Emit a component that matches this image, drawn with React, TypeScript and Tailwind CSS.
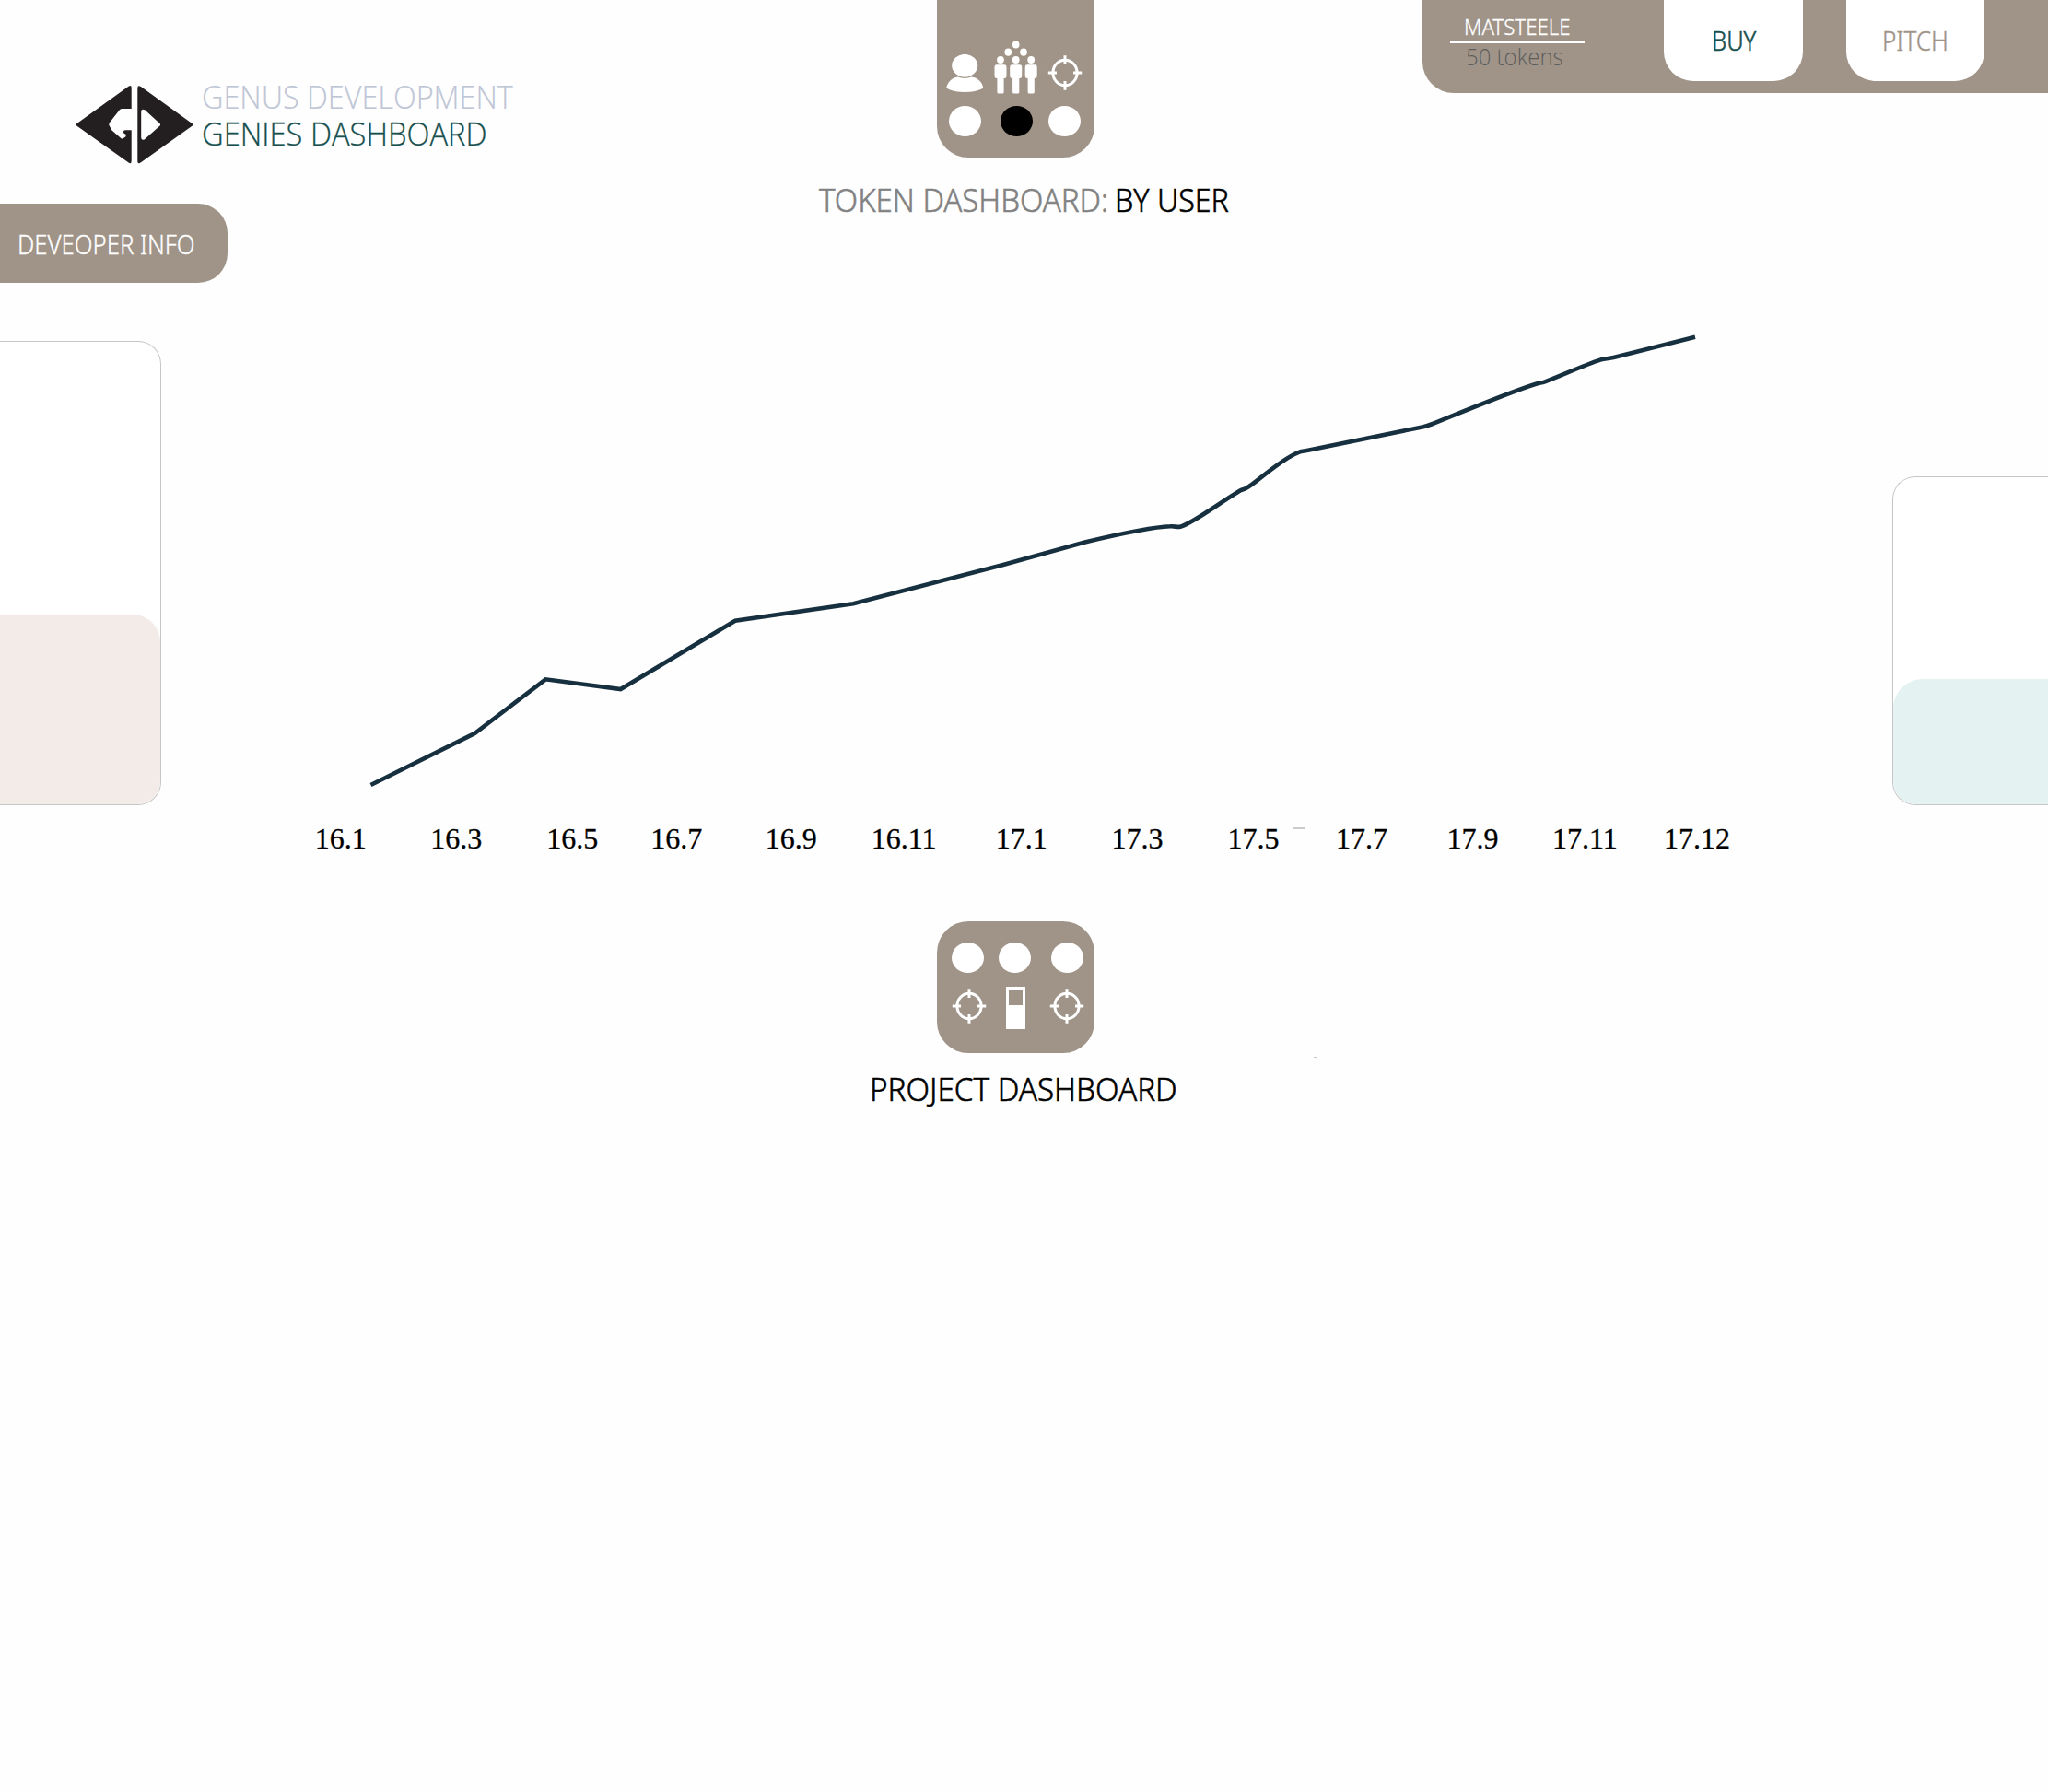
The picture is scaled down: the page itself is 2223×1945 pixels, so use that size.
import React from "react";

const AXIS = [
  { label: "16.1", slot: "w-[125.5px]" },
  { label: "16.3", slot: "w-[126px]" },
  { label: "16.5", slot: "w-[113px]" },
  { label: "16.7", slot: "w-[124.5px]" },
  { label: "16.9", slot: "w-[115px]" },
  { label: "16.11", slot: "w-[135px]" },
  { label: "17.1", slot: "w-[125.7px]" },
  { label: "17.3", slot: "w-[126px]" },
  { label: "17.5", slot: "w-[117.5px]", dash: true },
  { label: "17.7", slot: "w-[120.5px]" },
  { label: "17.9", slot: "w-[114.5px]" },
  { label: "17.11", slot: "w-[121px]" },
  { label: "17.12", slot: "w-[80px]" },
];

function Text({ children, className = "" }: { children: React.ReactNode; className?: string }) {
  return (
    <span className={`block origin-left whitespace-nowrap leading-none font-light ${className}`}>
      {children}
    </span>
  );
}

function Logo() {
  return (
    <svg width="128" height="86" viewBox="82 92 128 86" className="shrink-0" fill="#231f20">
      <path d="M83.2 134.2 L139.8 93.6 Q142.7 92 142.7 95 V118 H132.6 Q131 118 129.8 119.3 L118.8 133.2 Q117.8 135 118.8 136.8 L121.5 141.5 L131.5 150.2 Q132.6 151 133.6 150.2 L136.2 148.6 Q137 147.8 136.3 145.6 Q134.2 145.6 134 143.6 Q133.6 141.2 135.8 141.2 H142.7 V174.5 Q142.7 178.4 139.6 176.6 L83.2 136.6 Q81.8 135.4 83.2 134.2 Z" />
      <path
        fillRule="evenodd"
        d="M149.3 95.4 Q149.3 92 152.6 93.8 L208.8 134.2 Q210.2 135.4 208.8 136.6 L152.6 176.6 Q149.3 178.4 149.3 175 Z M153.2 121 V149.6 Q153.4 152.4 156.6 151.6 L173.6 136.6 Q174.6 135.4 173.6 134.2 L157.2 119.2 Q153.6 117.6 153.2 121 Z"
      />
    </svg>
  );
}

function UserIcon() {
  return (
    <svg width="40" height="41" viewBox="1027 59 40 41" fill="#fff">
      <ellipse cx="1047.2" cy="71.3" rx="14" ry="12.4" />
      <path d="M1039.6 83.6 Q1047 86.4 1054.4 83.6 C1061 84.2 1065.4 88.6 1067 94 Q1067.4 96 1064.4 97 Q1058 100 1047.2 100 Q1036.4 100 1030 97 Q1027 96 1027.5 94 C1029.4 88.6 1033.6 84.2 1039.6 83.6 Z" />
    </svg>
  );
}

function CrowdIcon() {
  return (
    <svg width="48" height="58" viewBox="1079 44.5 48 58" fill="#fff">
      <ellipse cx="1102.7" cy="49" rx="3.8" ry="4.1" />
      <ellipse cx="1094.3" cy="57.2" rx="3.8" ry="4.1" />
      <ellipse cx="1111" cy="57.2" rx="3.8" ry="4.1" />
      {[1086, 1102.7, 1119.2].map((x) => (
        <g key={x}>
          <ellipse cx={x} cy="65.5" rx="3.9" ry="4.1" />
          <rect x={x - 6.5} y="70.8" width="13" height="14.8" rx="2.4" />
          <rect x={x - 3.6} y="80" width="7.2" height="22" rx="1.6" />
        </g>
      ))}
    </svg>
  );
}

function TargetIcon() {
  return (
    <svg width="38" height="38" viewBox="-19 -19 38 38" fill="none" stroke="#fff" strokeWidth="3">
      <ellipse rx="13.1" ry="13.7" />
      <path d="M0 -18.8 V-9 M0 18.8 V9 M-18.2 0 H-9 M18.2 0 H9" />
    </svg>
  );
}

function Dot({ className }: { className: string }) {
  return <span className={`block h-[33px] w-[35px] shrink-0 rounded-[50%] ${className}`} />;
}

export default function App() {
  return (
    <div className="min-h-[1945px] w-[2223px] overflow-hidden bg-[#fefefe] font-['Open_Sans',sans-serif]">
      <header className="flex h-[340px] items-start">
        {/* Brand and developer tab */}
        <div className="w-[889px]">
          <div className="flex h-[221px] items-start pl-[82px] pt-[86px]">
            <div className="pt-1.5">
              <Logo />
            </div>
            <div className="pl-[9px] pt-px">
              <Text className="h-[40px] scale-x-[0.925] text-[35px] text-[#bfc6d6] [-webkit-text-stroke:0.2px]">
                GENUS DEVELOPMENT
              </Text>
              <Text className="scale-x-[0.934] text-[35px] text-[#17504f] [-webkit-text-stroke:0.3px]">
                GENIES DASHBOARD
              </Text>
            </div>
          </div>
          <div className="h-[86px] w-[247px] rounded-r-[32px] bg-[#a09489] pl-[19px] pt-[30px]">
            <Text className="scale-x-[0.903] font-['Noto_Sans'] text-[28.5px] text-white [-webkit-text-stroke:0.3px]">
              DEVEOPER INFO
            </Text>
          </div>
        </div>

        {/* Token dashboard switcher */}
        <div className="w-[655px]">
          <div className="ml-32 h-[171px] w-[171px] rounded-b-[34px] bg-[#a09489] pt-[44px]">
            <div className="flex h-[58px] items-start pl-[10px]">
              <div className="pt-[15px]">
                <UserIcon />
              </div>
              <div className="ml-[12px]">
                <CrowdIcon />
              </div>
              <div className="ml-[9.7px] pt-[16px]">
                <TargetIcon />
              </div>
            </div>
            <div className="flex pl-[13px] pt-[13px]">
              <Dot className="bg-white" />
              <Dot className="ml-[21px] bg-black" />
              <Dot className="ml-[17px] bg-white" />
            </div>
          </div>
          <div className="flex pt-[27.5px]">
            <Text className="w-[320.8px] scale-x-[0.929] font-['Noto_Sans'] text-[35.5px] text-[#828282] [-webkit-text-stroke:0.6px]">
              TOKEN DASHBOARD:
            </Text>
            <Text className="scale-x-[0.907] font-['Noto_Sans'] text-[35.5px] text-black [-webkit-text-stroke:0.6px]">
              BY USER
            </Text>
          </div>
        </div>

        {/* Account bar */}
        <div className="flex h-[101px] flex-1 items-start rounded-bl-[34px] bg-[#a09489]">
          <div className="w-[262px] pl-[30px] pt-[17px]">
            <Text className="ml-[14.5px] scale-x-[0.908] font-['Noto_Sans'] text-[24.5px] text-white [-webkit-text-stroke:0.3px]">
              MATSTEELE
            </Text>
            <div className="mt-[2.5px] h-[3px] w-[146px] bg-white" />
            <Text className="ml-[16.5px] mt-px scale-x-[0.922] text-[26px] text-[#5b5d5d]">50 tokens</Text>
          </div>
          <div className="h-[88px] w-[150.5px] rounded-b-[32px] bg-white pl-[52px] pt-[30px]">
            <Text className="scale-x-[0.896] font-['Noto_Sans'] text-[28.5px] text-[#17504f] [-webkit-text-stroke:0.6px]">
              BUY
            </Text>
          </div>
          <div className="ml-[47px] h-[88px] w-[150.5px] rounded-b-[32px] bg-white pl-[39px] pt-[30px]">
            <Text className="scale-x-[0.915] font-['Noto_Sans'] text-[28.5px] text-[#a09489] [-webkit-text-stroke:0.4px]">
              PITCH
            </Text>
          </div>
        </div>
      </header>

      <main className="flex h-[660px] items-start">
        <aside className="mr-px mt-[30px] flex h-[504px] w-[175px] flex-col justify-end overflow-hidden rounded-r-[25px] border border-l-0 border-[#c6c6c6] bg-white">
          <div className="h-[206px] rounded-tr-[30px] rounded-br-[25px] bg-[#f2ebe8]" />
        </aside>

        <section className="flex-1">
          <svg
            width="1878"
            height="554"
            viewBox="176 340 1878 554"
            fill="none"
            stroke="#17303f"
            strokeWidth="4.6"
          >
            <path d="M402.5 852 L515.3 796 L592.2 737.3 L673.7 748 L798 673.7 L926.2 655.3 L1089 613 L1177.5 588.5 C1205 582 1250 572 1270.3 571.3 C1275 571 1278 572.4 1281 571.7 C1293 569 1322 547 1346.5 532.3 C1349 531 1350 531.4 1352.5 530 C1364 524 1390 498 1410.4 490.6 C1413 489.6 1416 489.6 1421 488.5 L1545 463.2 Q1550 462 1555 460 C1580 450 1640 425 1668 416.5 C1672 415.3 1673 415.8 1677 414.3 C1694 408 1720 396 1737 390.6 C1740 389.4 1744 389.8 1751.5 388 L1840 365.7" />
          </svg>
          <div className="flex h-8 pl-[165.7px] font-['Liberation_Serif']">
            {AXIS.map(({ label, slot, dash }) => (
              <div key={label} className={`flex shrink-0 ${slot}`}>
                <span className="text-[32px] leading-none text-black [-webkit-text-stroke:0.3px]">{label}</span>
                {dash && <span className="ml-[15px] mt-[4px] h-[2px] w-[14px] bg-[#cdcbc9]" />}
              </div>
            ))}
          </div>
        </section>

        <aside className="mt-[177px] flex h-[357px] w-[169px] flex-col justify-end overflow-hidden rounded-l-[25px] border border-r-0 border-[#c6c6c6] bg-white">
          <div className="h-[136.5px] rounded-tl-[32px] rounded-bl-[25px] bg-[#e5f2f2]" />
        </aside>
      </main>

      {/* Project dashboard switcher */}
      <footer className="flex items-start">
        <div className="box-content w-[482px] pl-[943.5px]">
          <div className="ml-[73.5px] h-[142.5px] w-[171px] rounded-[34px] bg-[#a09489] pt-[23px]">
            <div className="flex pl-[15.5px]">
              <Dot className="bg-white" />
              <Dot className="ml-[16.5px] bg-white" />
              <Dot className="ml-[21.5px] bg-white" />
            </div>
            <div className="flex items-start pl-[15.7px] pt-[15px]">
              <div className="pt-[2px]">
                <TargetIcon />
              </div>
              <div className="ml-[21.3px] h-[46px] w-[21px] border-x-3 border-t-3 border-b-[26px] border-white" />
              <div className="ml-[26px] pt-[2px]">
                <TargetIcon />
              </div>
            </div>
          </div>
          <Text className="mt-[21px] scale-x-[0.936] font-['Noto_Sans'] text-[35.5px] text-black [-webkit-text-stroke:0.6px]">
            PROJECT DASHBOARD
          </Text>
        </div>
        <span className="mt-[147px] h-px w-[3px] bg-[#c4c4c4]" />
      </footer>
    </div>
  );
}
